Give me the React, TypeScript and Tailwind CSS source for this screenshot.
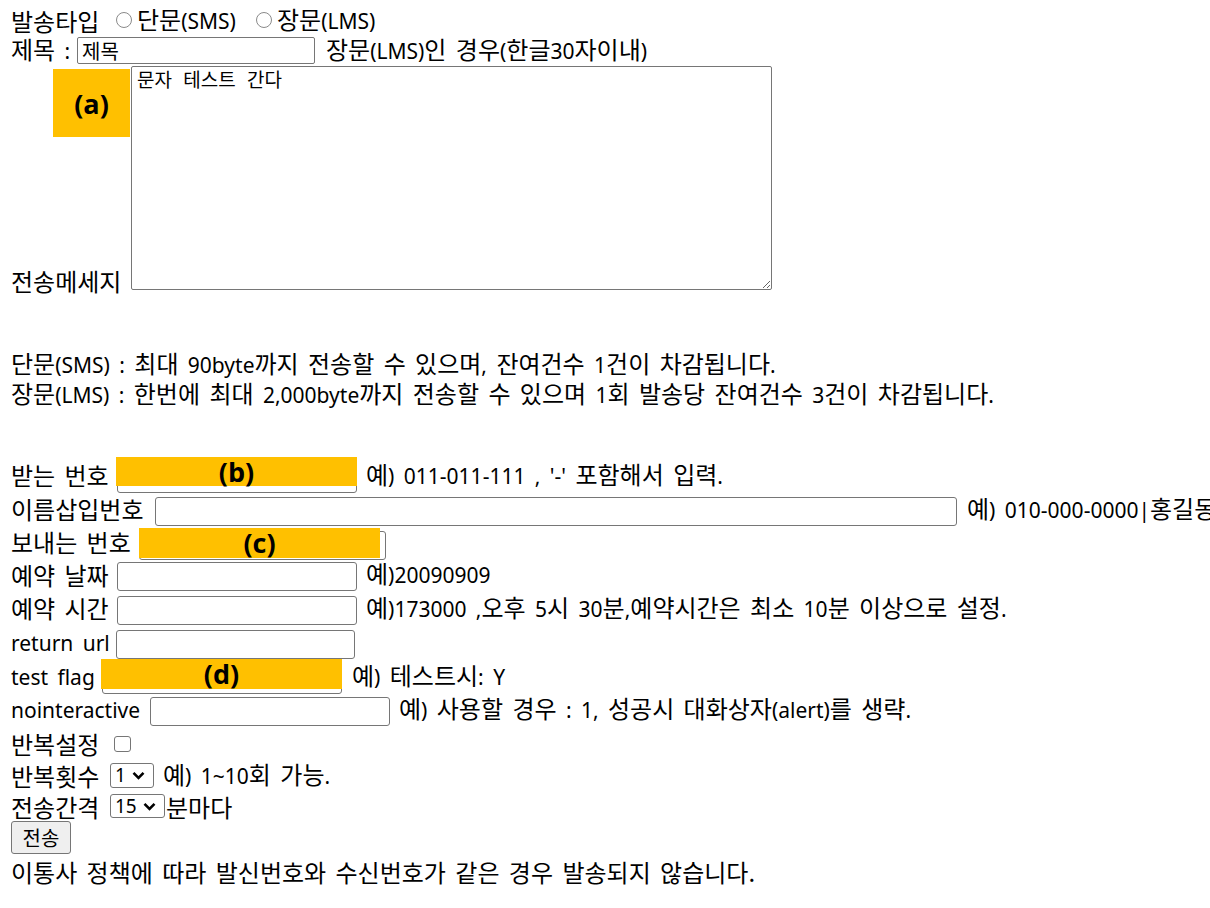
import React from "react";

const CJK = "font-['Noto_Sans_CJK_KR',sans-serif]";
const ROW = "flex items-center [&>span]:mb-[5px]";

function T({ s }: { s: string }) {
  const parts = s.split(/([\x21-\x7e]+)/);
  return (
    <>
      {parts.map((p, i) =>
        i % 2 === 1 ? (
          <span key={i} className="font-['Noto_Sans','Noto_Sans_CJK_KR',sans-serif] text-[21px]">
            {p}
          </span>
        ) : (
          <React.Fragment key={i}>{p}</React.Fragment>
        )
      )}
    </>
  );
}

function Radio() {
  return <span className="inline-block w-[16px] h-[16px] rounded-full border border-[#8a8a8a] bg-white shrink-0" />;
}

function TextInput({ w = "w-[240px]", value = "" }: { w?: string; value?: string }) {
  return (
    <input
      type="text"
      defaultValue={value}
      className={`${w} h-[29px] shrink-0 border border-[#767676] rounded-[3px] bg-white px-[4px] text-[20px] text-black outline-none [word-spacing:0px] ${CJK}`}
    />
  );
}

function Tag({ label, cls }: { label: string; cls: string }) {
  return (
    <div
      className={`absolute ${cls} bg-[#ffc000] flex items-center justify-center text-[27px] font-bold text-black font-['Open_Sans',sans-serif] leading-none [word-spacing:0px]`}
    >
      {label}
    </div>
  );
}

function Select({ value, w, h }: { value: string; w: string; h: string }) {
  return (
    <div
      className={`${w} ${h} shrink-0 border border-[#767676] rounded-[3px] bg-white flex items-center justify-between pl-[4px] pr-[8px] text-[19px] leading-none font-['Noto_Sans',sans-serif]`}
    >
      <span>{value}</span>
      <svg width="13" height="9" viewBox="0 0 13 9">
        <path d="M1.5 1.8 L6.5 6.8 L11.5 1.8" fill="none" stroke="#000" strokeWidth="2.6" />
      </svg>
    </div>
  );
}

export default function App() {
  return (
    <div className={`min-h-screen w-full overflow-hidden bg-white text-black text-[24px] leading-[29px] [word-spacing:4px] ${CJK}`}>
      <div className="pl-[11px] pt-[4px] whitespace-nowrap">
        {/* row 1 */}
        <div className="h-[32px] flex items-center">
          <span className="w-[105px] shrink-0">발송타입</span>
          <Radio />
          <span className="ml-[5px] w-[119px] shrink-0"><T s="단문(SMS)" /></span>
          <Radio />
          <span className="ml-[5px]"><T s="장문(LMS)" /></span>
        </div>
        {/* row 2 */}
        <div className="h-[29px] flex items-center [&>span]:mb-[2px]">
          <span className="w-[66px] shrink-0"><T s="제목 :" /></span>
          <input
            type="text"
            defaultValue="제목"
            className={`w-[238px] h-[27px] border border-[#767676] rounded-[2px] bg-white px-[4px] text-[20px] outline-none [word-spacing:0px] ${CJK}`}
          />
          <span className="ml-[11px]"><T s="장문(LMS)인 경우(한글30자이내)" /></span>
        </div>
        {/* row 3 */}
        <div className="h-[230px] flex items-start relative">
          <span className="w-[120px] shrink-0 self-end">전송메세지</span>
          <textarea
            defaultValue="문자 테스트 간다"
            className={`mt-[1px] w-[641px] h-[224px] border border-[#767676] rounded-[2px] bg-white px-[5px] pt-[0px] text-[19px] leading-[24px] [word-spacing:7px] outline-none resize ${CJK}`}
          />
          <Tag label="(a)" cls="left-[42px] top-[4px] w-[77px] h-[68px]" />
        </div>

        {/* info lines */}
        <div className="mt-[52px] h-[31px] flex items-center">
          <span className="mt-[2px]"><T s="단문(SMS) : 최대 90byte까지 전송할 수 있으며, 잔여건수 1건이 차감됩니다." /></span>
        </div>
        <div className="h-[31px] flex items-center">
          <span><T s="장문(LMS) : 한번에 최대 2,000byte까지 전송할 수 있으며 1회 발송당 잔여건수 3건이 차감됩니다." /></span>
        </div>

        {/* form rows */}
        <div className={`mt-[51px] h-[34px] ${ROW}`}>
          <span className="w-[106px] shrink-0">받는 번호</span>
          <div className="relative">
            <TextInput />
            <Tag label="(b)" cls="-left-[1px] -top-[5px] w-[241px] h-[29px]" />
          </div>
          <span className="ml-[9px]"><T s="예) 011-011-111 , '-' 포함해서 입력." /></span>
        </div>
        <div className={`h-[34px] ${ROW}`}>
          <span className="w-[144px] shrink-0">이름삽입번호</span>
          <TextInput w="w-[802px]" />
          <span className="ml-[10px]"><T s="예) 010-000-0000|홍길동" /></span>
        </div>
        <div className={`h-[32px] ${ROW}`}>
          <span className="w-[128px] shrink-0">보내는 번호</span>
          <div className="relative">
            <TextInput w="w-[247px]" />
            <Tag label="(c)" cls="left-0 -top-[1px] w-[241px] h-[30px]" />
          </div>
        </div>
        <div className={`h-[33px] ${ROW}`}>
          <span className="w-[106px] shrink-0">예약 날짜</span>
          <TextInput />
          <span className="ml-[9px]"><T s="예)20090909" /></span>
        </div>
        <div className={`h-[34px] ${ROW}`}>
          <span className="w-[106px] shrink-0">예약 시간</span>
          <TextInput />
          <span className="ml-[9px]"><T s="예)173000 ,오후 5시 30분,예약시간은 최소 10분 이상으로 설정." /></span>
        </div>
        <div className={`h-[34px] ${ROW}`}>
          <span className="w-[105px] shrink-0"><T s="return url" /></span>
          <TextInput w="w-[239px]" />
        </div>
        <div className={`h-[34px] ${ROW}`}>
          <span className="w-[91px] shrink-0"><T s="test flag" /></span>
          <div className="relative">
            <TextInput />
            <Tag label="(d)" cls="-left-[1px] -top-[4px] w-[241px] h-[30px]" />
          </div>
          <span className="ml-[10px]"><T s="예) 테스트시: Y" /></span>
        </div>
        <div className={`h-[33px] ${ROW}`}>
          <span className="w-[139px] shrink-0"><T s="nointeractive" /></span>
          <TextInput />
          <span className="ml-[9px]"><T s="예) 사용할 경우 : 1, 성공시 대화상자(alert)를 생략." /></span>
        </div>
        <div className="h-[31px] flex items-center">
          <span className="w-[103px] shrink-0">반복설정</span>
          <span className="inline-block w-[17px] h-[16px] border border-[#767676] rounded-[3px] bg-white" />
        </div>
        <div className="h-[32px] flex items-center">
          <span className="w-[99px] shrink-0">반복횟수</span>
          <Select value="1" w="w-[44px]" h="h-[25px]" />
          <span className="ml-[9px]"><T s="예) 1~10회 가능." /></span>
        </div>
        <div className="h-[30px] flex items-center">
          <span className="w-[99px] shrink-0">전송간격</span>
          <Select value="15" w="w-[55px]" h="h-[24px]" />
          <span className="ml-[1px]">분마다</span>
        </div>
        <div className="h-[33px] flex items-center">
          <button
            type="button"
            className={`w-[60px] h-[33px] border border-[#767676] rounded-[3px] bg-[#efefef] text-[20px] leading-none ${CJK}`}
          >
            전송
          </button>
        </div>
        <div className="h-[34px] flex items-center">
          <span>이통사 정책에 따라 발신번호와 수신번호가 같은 경우 발송되지 않습니다.</span>
        </div>
      </div>
    </div>
  );
}
